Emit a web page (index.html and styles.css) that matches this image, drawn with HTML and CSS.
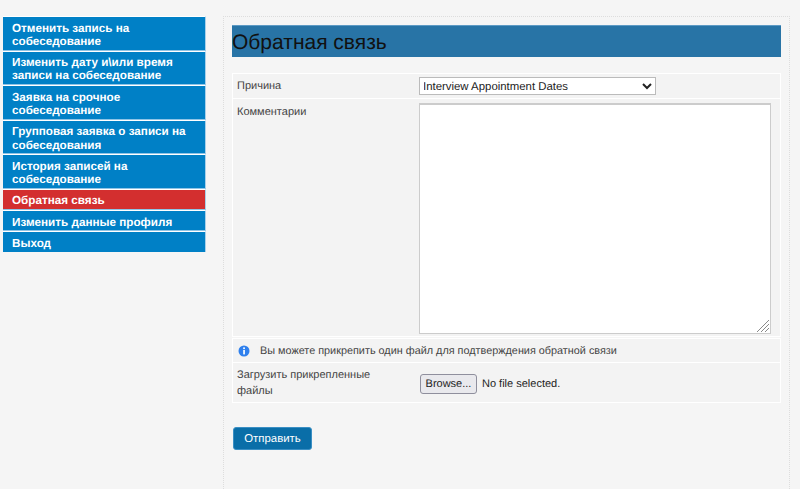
FILE: index.html
```html
<!DOCTYPE html>
<html lang="ru">
  <head>
    <meta name="viewport" content="width=device-width, initial-scale=1.0" />
    <title>Обратная связь</title>
    <link rel="stylesheet" href="styles.css">
  </head>
  <body>
    <ul class="side-menu">
      <li><a href="#">Отменить запись на собеседование</a></li>
      <li><a href="#">Изменить дату и\или время записи на собеседование</a></li>
      <li><a href="#">Заявка на срочное собеседование</a></li>
      <li><a href="#">Групповая заявка о записи на собеседования</a></li>
      <li><a href="#">История записей на собеседование</a></li>
      <li class="active"><a href="#">Обратная связь</a></li>
      <li><a href="#">Изменить данные профиля</a></li>
      <li><a href="#">Выход</a></li>
    </ul>
    <div class="main">
      <h1>Обратная связь</h1>
      <div class="form-table">
        <div class="row row-reason">
          <label>Причина</label>
          <select class="reason">
            <option>Interview Appointment Dates</option>
          </select>
        </div>
        <div class="row row-comment">
          <label>Комментарии</label>
          <div class="comment-wrap">
            <textarea class="comment"></textarea>
            <svg class="grip" width="14" height="14" viewBox="0 0 14 14">
              <path d="M1 13L13 1M5 13L13 5M9 13L13 9" stroke="#8a8a8a" stroke-width="1" fill="none" />
            </svg>
          </div>
        </div>
        <div class="row row-note">
          <svg class="info" width="12" height="12" viewBox="0 0 12 12">
            <circle cx="6" cy="6" r="5.5" fill="#2f80ed" />
            <rect x="5.2" y="2.4" width="1.7" height="1.7" fill="#fff" />
            <rect x="5.2" y="5" width="1.7" height="4.4" fill="#fff" />
          </svg>
          <span>Вы можете прикрепить один файл для подтверждения обратной связи</span>
        </div>
        <div class="row row-file">
          <label>Загрузить прикрепленные файлы</label>
          <div class="file-field">
            <button type="button" class="browse">Browse...</button>
            <span>No file selected.</span>
          </div>
        </div>
      </div>
      <button type="button" class="send">Отправить</button>
    </div>
  </body>
</html>
```

FILE: styles.css
```css
* {
  padding: 0;
  margin: 0;
  box-sizing: border-box;
  font-family: "Liberation Sans", Arial, sans-serif;
  text-rendering: geometricPrecision;
}
body {
  background: #f5f5f5;
  display: flex;
  align-items: flex-start;
  height: 489px;
  overflow: hidden;
  padding: 16px 10px 0 3px;
  color: #444;
  font-size: 11px;
}
.side-menu {
  list-style: none;
  width: 203px;
  flex-shrink: 0;
  margin-right: 17px;
}
.side-menu li {
  background: #0080c6;
  border-top: 1px solid #fff;
  border-bottom: 1px solid #8fc4e6;
  border-right: 1px solid #a8d0ea;
}
.side-menu li:last-child {
  border-bottom: 0;
}
.side-menu a {
  display: block;
  padding: 4.6px 9px 1.4px;
  color: #fff;
  font-size: 11.7px;
  font-weight: bold;
  line-height: 13.3px;
  text-decoration: none;
}
.side-menu li.active {
  background: #d32f2f;
}
.main {
  flex: 1;
  height: 473px;
  border-left: 1px dotted #ddd;
  border-top: 1px dotted #ddd;
  border-right: 1px dotted #ddd;
  padding: 8px 8px 0 8px;
}
.main h1 {
  height: 32px;
  line-height: 34px;
  background: #2874a6;
  border-top: 1px solid #5d9ac4;
  color: #111;
  font-size: 21px;
  font-weight: normal;
}
.form-table {
  margin-top: 16px;
  margin-bottom: 24px;
}
.row {
  display: flex;
  border: 1px solid #fff;
  border-bottom: 0;
  background: #f3f3f3;
  padding: 0 4px;
}
.row:last-child {
  border-bottom: 1px solid #fff;
}
.row label {
  width: 182px;
  flex-shrink: 0;
  line-height: 16px;
}
.row-reason label,
.row-comment label {
  padding-top: 1px;
}
.row-reason {
  height: 25px;
  padding-top: 3px;
}
.reason {
  width: 237px;
  height: 18px;
  padding-top: 1px;
  text-indent: -1px;
  font-size: 11.4px;
  color: #222;
  background: #fff;
  border: 1px solid #bbb;
}
.row-comment {
  height: 239px;
  padding-top: 4px;
  border-bottom: 1px solid #fff;
}
.comment-wrap {
  position: relative;
  width: 352px;
  height: 231px;
}
.comment {
  display: block;
  width: 100%;
  height: 100%;
  resize: none;
  background: #fff;
  border: 1px solid #ccc;
  border-top-width: 2px;
}
.grip {
  position: absolute;
  right: 1px;
  bottom: 1px;
}
.row-note {
  height: 24px;
  align-items: center;
  padding-left: 5px;
  margin-top: 1px;
  font-size: 10.85px;
}
.info {
  margin-right: 10px;
}
.row-file {
  height: 41px;
  align-items: center;
  padding-top: 2px;
}
.row-file label {
  padding-right: 30px;
  padding-bottom: 2px;
}
.file-field {
  display: flex;
  align-items: center;
  gap: 5px;
  margin-left: 1px;
  color: #222;
}
.browse {
  width: 57px;
  height: 20px;
  font-size: 11px;
  color: #222;
  background: #e9e9ed;
  border: 1px solid #8f8f9d;
  border-radius: 3px;
}
.send {
  display: block;
  width: 79px;
  height: 23px;
  margin-left: 1px;
  background: #0a6ea8;
  border: 1px solid #3a8fc4;
  border-radius: 3px;
  color: #fff;
  font-size: 11.4px;
}
```
